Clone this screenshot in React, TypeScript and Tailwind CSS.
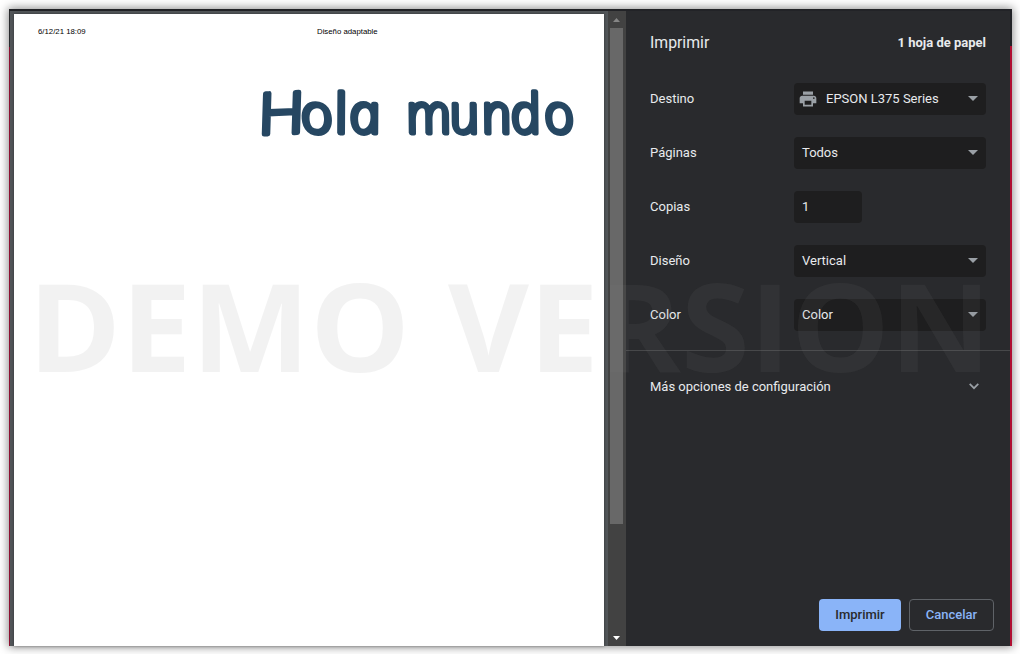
import React from "react";

const runs = [
  { text: "H", x: [0], scale: 1, matrix: "matrix(1.1 -0.05 -0.03 0.98 258 134.5)", cls: "text-[58px] font-light" },
  { text: "ola", x: [304, 338, 352.5], scale: 1.03, matrix: "matrix(1.03 0 0.2126 1 0 132.8)", cls: "text-[54.5px] font-light italic" },
  { text: "mundo", x: [409.5, 453, 485, 514, 547.5], scale: 0.96, matrix: "matrix(0.96 0 0.2126 1 0 132.8)", cls: "text-[54.5px] font-light italic" },
];

function Arrow() {
  return (
    <svg className="relative -top-px h-[5px] w-[10px]" viewBox="0 0 10 5"><path d="M0 0h10L5 5z" fill="#9aa0a6" /></svg>
  );
}

function Row({ label, children }: { label: string; children: React.ReactNode }) {
  return (
    <div className="flex h-[54px] items-center justify-between pr-6">
      <span>{label}</span>
      {children}
    </div>
  );
}

function Select({ value, printer = false }: { value: string; printer?: boolean }) {
  return (
    <div className="flex h-8 w-48 items-center rounded bg-[#1e1e1f] pr-2 pl-2">
      {printer && (
        <svg className="-ml-[4px] mr-[8px] h-5 w-5" viewBox="0 0 24 24" fill="#9aa0a6">
          <path d="M19 8H5c-1.66 0-3 1.34-3 3v6h4v4h12v-4h4v-6c0-1.66-1.34-3-3-3zm-3 11H8v-5h8v5zm3-7c-.55 0-1-.45-1-1s.45-1 1-1 1 .45 1 1-.45 1-1 1zm-1-9H6v4h12V3z" />
        </svg>
      )}
      <span className="flex-1">{value}</span>
      <Arrow />
    </div>
  );
}

export default function App() {
  return (
    <div className="relative h-[654px] w-[1020px] overflow-hidden bg-white px-[9px] pt-[9px] pr-[8px] font-['Roboto',sans-serif] text-[13px] text-[#e8eaed]">
      <div className="flex h-[637px] w-[1003px] flex-col bg-[#292a2d] shadow-[0_0_9px_1px_rgba(0,0,0,0.45)]">
        <div className="h-[2px] shrink-0 bg-[#222327]" />
        <div className="flex min-h-0 flex-1">
          <div className="flex w-px flex-col bg-[#8c1030]"><div className="h-[36px] bg-[#292a2d]" /></div>
          <main className="w-[598px] bg-[#525659] pt-[3px] pr-1 pl-1">
            <div className="h-full bg-white shadow-[0_0_3px_rgba(0,0,0,0.4)]">
              <div className="flex pt-[13px] pl-6 font-['Liberation_Sans',sans-serif] text-[7.8px] leading-[10px] text-black">
                <span className="w-[279px]">6/12/21 18:09</span>
                <span>Diseño adaptable</span>
              </div>
            </div>
          </main>
          <div className="flex w-[18px] flex-col items-center bg-[#424242]">
            <div className="flex h-[17px] w-full items-center justify-center pr-[1px]">
              <svg className="h-1 w-[7px]" viewBox="0 0 7 4"><path d="M0 4L3.5 0 7 4z" fill="#868686" /></svg>
            </div>
            <div className="mr-[1px] h-[496px] w-[13px] bg-[#686868]" />
            <div className="flex flex-1 items-end pr-[1px] pb-[6px]">
              <svg className="h-1 w-[7px]" viewBox="0 0 7 4"><path d="M0 0h7L3.5 4z" fill="#fff" /></svg>
            </div>
          </div>
          <aside className="flex w-[384px] flex-col">
            <div className="flex h-[61px] items-center justify-between pt-[2px] pr-6 pl-6">
              <h1 className="text-[15.8px] leading-5">Imprimir</h1>
              <span className="font-bold">1 hoja de papel</span>
            </div>
            <div className="flex flex-col pl-6">
              <Row label="Destino"><Select value="EPSON L375 Series" printer /></Row>
              <Row label="Páginas"><Select value="Todos" /></Row>
              <Row label="Copias">
                <div className="mr-[124px] flex h-8 w-[68px] items-center rounded bg-[#1e1e1f] pl-2">1</div>
              </Row>
              <Row label="Diseño"><Select value="Vertical" /></Row>
              <Row label="Color"><Select value="Color" /></Row>
            </div>
            <div className="mt-[8px] border-t border-[#47484a]" />
            <div className="flex h-[71px] items-center justify-between pr-[31px] pl-6">
              <span>Más opciones de configuración</span>
              <svg className="h-[7px] w-[10px]" viewBox="0 0 10 7" fill="none" stroke="#9aa0a6" strokeWidth="1.7"><path d="M.7.9L5 5.2 9.3.9" /></svg>
            </div>
            <div className="mt-auto flex justify-end gap-2 pr-4 pb-[15px] font-medium">
              <button className="h-8 w-[82px] rounded bg-[#8ab4f8] text-[#292a2d]">Imprimir</button>
              <button className="h-8 w-[85px] rounded border border-[#5f6368] text-[#8ab4f8]">Cancelar</button>
            </div>
          </aside>
          <div className="flex w-[2px] flex-col bg-[#b00f32]"><div className="h-[35px] bg-[#222327]" /></div>
        </div>
      </div>
      <svg className="absolute top-0 left-0 h-[160px] w-[600px]" viewBox="0 0 600 160">
        {runs.map((r) => (
          <text
            key={r.text}
            transform={r.matrix}
            x={r.x.map((v) => v / r.scale).join(" ")}
            y="0"
            className={r.cls}
            fontFamily="Open Sans"
            fill="#264762" stroke="#264762" strokeWidth="4.8" strokeLinejoin="round"
          >
            {r.text}
          </text>
        ))}
      </svg>
      <div className="pointer-events-none absolute top-[243px] left-[28px] flex h-[166px] items-center font-['Open_Sans',sans-serif] text-[121.4px] leading-none font-bold whitespace-pre text-[#808080]/10">
        <span className="w-[420px] origin-left scale-x-[1.036]">DEMO</span>
        <span className="origin-left scale-x-[1.026]">VERSION</span>
      </div>
    </div>
  );
}
